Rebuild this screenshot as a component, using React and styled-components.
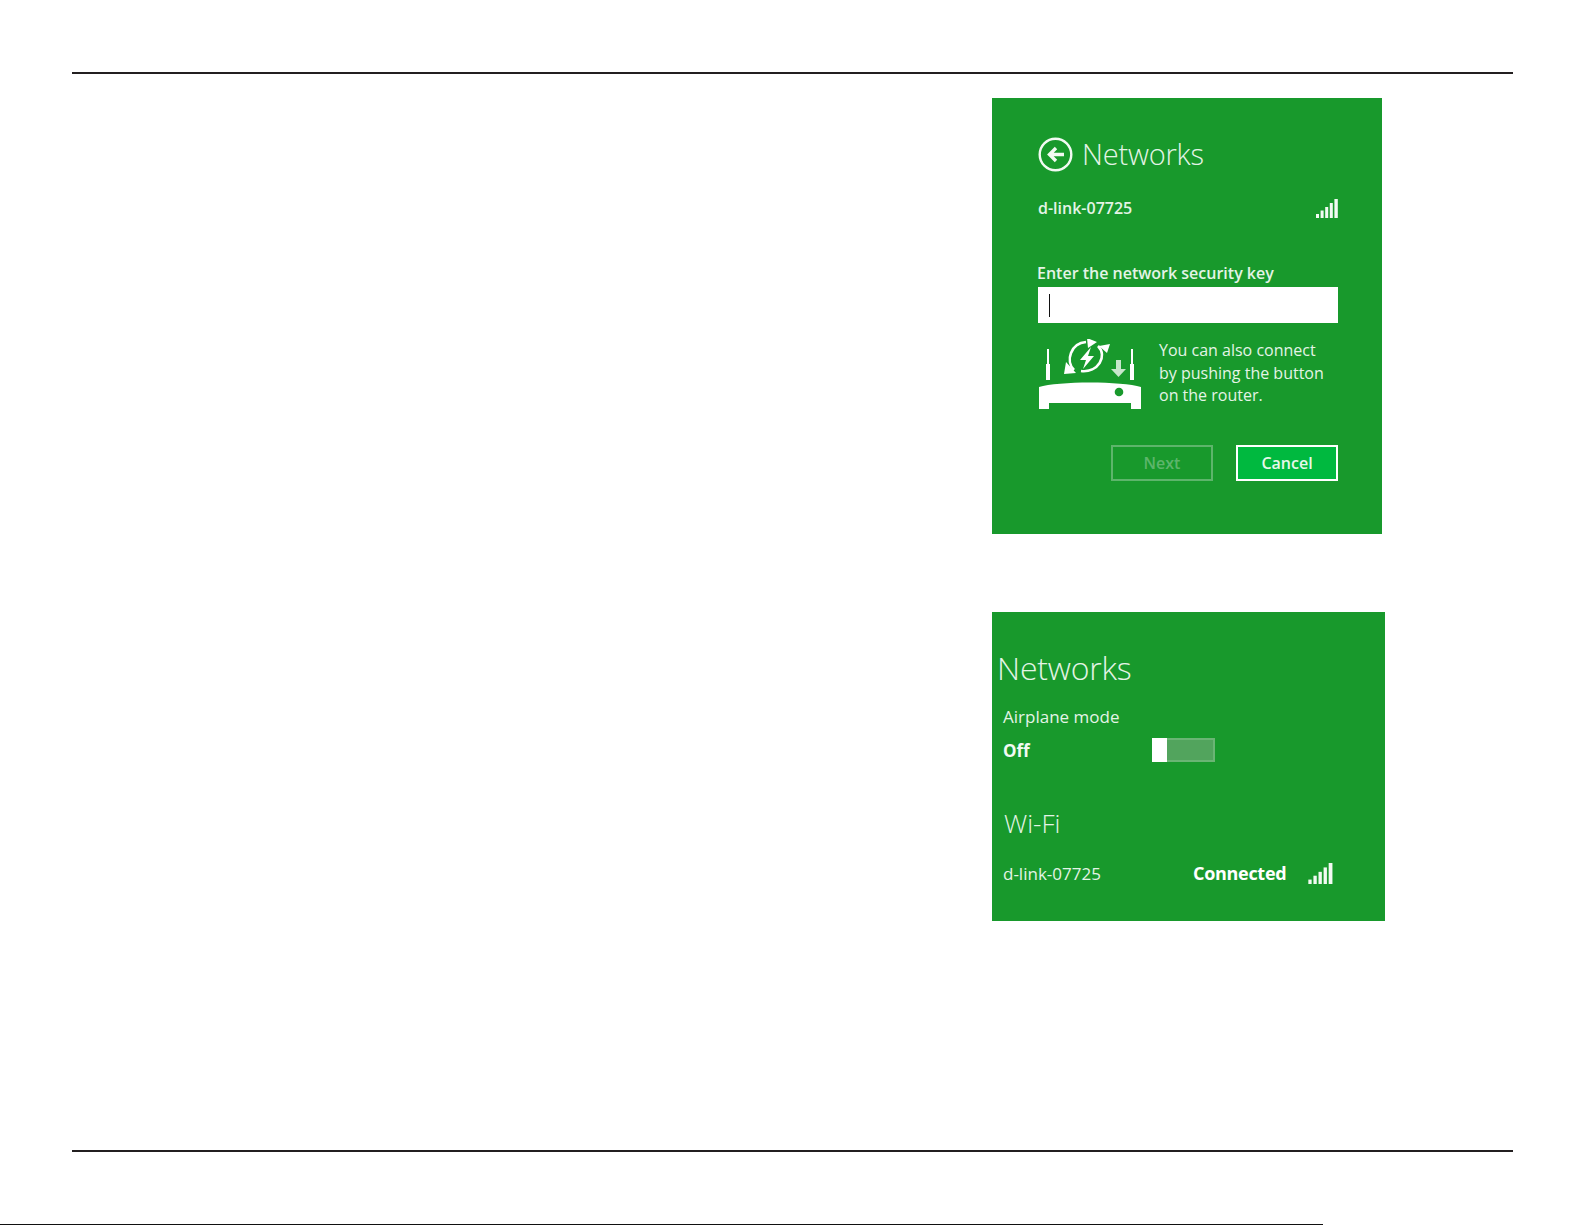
import React from 'react';
import styled, { createGlobalStyle } from 'styled-components';

const GREEN = '#18992c';
const TEXT = '#e4f4e6';
const SANS = '"Open Sans", "Noto Sans", sans-serif';

const GlobalStyle = createGlobalStyle`
  html, body {
    margin: 0;
    padding: 0;
    background: #fff;
  }
`;

const Page = styled.div`
  position: relative;
  width: 1585px;
  height: 1225px;
  overflow: hidden;
  padding-top: 72px;
  box-sizing: border-box;
  font-family: ${SANS};
`;

const Rule = styled.div`
  height: 2px;
  margin: 0 72px;
  background: #231f20;
`;

const Content = styled.main`
  height: 1076px;
  padding: 24px 0 0 992px;
  box-sizing: border-box;
`;

const Panel = styled.section`
  width: ${(p) => p.$w}px;
  height: ${(p) => p.$h}px;
  margin-bottom: 78px;
  background: ${GREEN};
  color: ${TEXT};
  box-sizing: border-box;
`;

const KeyPanel = styled(Panel)`
  display: flex;
  flex-direction: column;
  padding: 38px 44px 0 46px;
`;

const TitleRow = styled.div`
  display: flex;
  align-items: center;
  gap: 9px;
  height: 36px;
`;

const Title = styled.h2`
  margin: 0;
  font-size: 29px;
  font-weight: 300;
  line-height: 36px;
  letter-spacing: -0.2px;
`;

const NetRow = styled.div`
  display: flex;
  justify-content: space-between;
  align-items: center;
  margin-top: 24px;
  height: 24px;
  font-size: 16px;
  font-weight: 600;
`;

const KeyLabel = styled.label`
  margin: 42px 0 3px -1px;
  font-size: 16px;
  font-weight: 600;
  line-height: 22px;
`;

const KeyInput = styled.div`
  display: flex;
  align-items: center;
  height: 36px;
  padding-left: 11px;
  background: #fff;
`;

const Caret = styled.span`
  width: 1px;
  height: 23px;
  background: #111;
`;

const RouterRow = styled.div`
  display: flex;
  margin-top: 16px;
  gap: 17px;
`;

const RouterHint = styled.p`
  margin: 0;
  font-size: 16px;
  line-height: 22.6px;
`;

const Actions = styled.div`
  display: flex;
  justify-content: flex-end;
  gap: 23px;
  margin-top: 36px;
`;

const Button = styled.button`
  width: 102px;
  height: 36px;
  padding: 0;
  border: 2px solid ${(p) => (p.disabled ? '#5db56b' : '#fff')};
  background: ${(p) => (p.disabled ? 'transparent' : '#00b93f')};
  color: ${(p) => (p.disabled ? '#5db56b' : '#e8f8ea')};
  font-family: ${SANS};
  font-size: 16px;
  font-weight: 600;
`;

const StatusPanel = styled(Panel)`
  display: flex;
  flex-direction: column;
  padding: 38px 0 0 11px;
`;

const StatusTitle = styled(Title)`
  margin-left: -6px;
  font-size: 32px;
`;

const ModeLabel = styled.div`
  margin-top: 19px;
  font-size: 17px;
  line-height: 24px;
  font-weight: 400;
`;

const ToggleRow = styled.div`
  display: flex;
  align-items: center;
  height: 24px;
  margin-top: 9px;
`;

const OffText = styled.span`
  width: 149px;
  font-size: 17px;
  font-weight: 700;
  color: #f2faf3;
`;

const Toggle = styled.div`
  display: flex;
  width: 63px;
  height: 24px;
  background: #52a45d;
  box-shadow: inset 0 0 0 2px #6ab574;
`;

const Thumb = styled.span`
  width: 15px;
  height: 24px;
  background: #fff;
`;

const WifiTitle = styled.h3`
  margin: 44px 0 0 1px;
  font-size: 26px;
  font-weight: 300;
  line-height: 34px;
`;

const WifiRow = styled.div`
  display: flex;
  align-items: center;
  margin-top: 21px;
  height: 24px;
  font-size: 17px;
`;

const WifiName = styled.span`
  width: 190px;
`;

const Connected = styled.strong`
  width: 115px;
  font-size: 18px;
  font-weight: 700;
  color: #fff;
  letter-spacing: -0.3px;
`;

const ScanEdge = styled.div`
  position: absolute;
  left: 0;
  bottom: 0;
  width: 1323px;
  height: 1px;
  background: #111;
`;

const BackIcon = () => (
  <svg width="35" height="35" viewBox="0 0 35 35" fill="none" stroke="#f2faf3">
    <circle cx="17.5" cy="17.5" r="15.8" strokeWidth="2.4" />
    <path d="M26 17.5H12M18 11l-6.5 6.5L18 24" strokeWidth="3.4" />
  </svg>
);

const Signal = ({ width = 22, height = 19 }) => (
  <svg width={width} height={height} viewBox="0 0 22 19" fill="#f2faf3">
    <rect x="0" y="15" width="3" height="4" />
    <rect x="4.6" y="11.5" width="3" height="7.5" />
    <rect x="9.2" y="8" width="3" height="11" />
    <rect x="13.8" y="4" width="3" height="15" />
    <rect x="18.4" y="0" width="3.4" height="19" />
  </svg>
);

const RouterIcon = () => (
  <svg width="104" height="70" viewBox="0 0 104 70" fill="#fff">
    <path d="M9 10h2v30H9zM93 10h2v30h-2z" />
    <path d="M8 25h4v16H8zM92 25h4v16h-4z" />
    <path d="M1 48C20 42 84 42 103 48V70H93V64H11V70H1Z" />
    <circle cx="81" cy="53" r="4.3" fill={GREEN} />
    <path d="M78 21h5v9h5l-7.5 8-7.5-8h5z" fill="#c8e6cc" />
    <g fill="none" stroke="#fff" strokeWidth="2.6">
      <path d="M36 31C27 22 33 4 48 3" />
      <path d="M43 32C60 34 70 17 60 7" />
    </g>
    <path d="M49 -1l10 4-9 6zM28 23l10 11-12 1zM69 14l-8-7 11-2z" />
    <path d="M53 8L42 21h6l-3 9 11-13h-6z" />
  </svg>
);

const App = () => (
  <Page>
    <GlobalStyle />
    <Rule />
    <Content>
      <KeyPanel $w={390} $h={436}>
        <TitleRow>
          <BackIcon />
          <Title>Networks</Title>
        </TitleRow>
        <NetRow>
          <span>d-link-07725</span>
          <Signal />
        </NetRow>
        <KeyLabel>Enter the network security key</KeyLabel>
        <KeyInput>
          <Caret />
        </KeyInput>
        <RouterRow>
          <RouterIcon />
          <RouterHint>
            You can also connect
            <br />
            by pushing the button
            <br />
            on the router.
          </RouterHint>
        </RouterRow>
        <Actions>
          <Button disabled>Next</Button>
          <Button>Cancel</Button>
        </Actions>
      </KeyPanel>
      <StatusPanel $w={393} $h={309}>
        <StatusTitle>Networks</StatusTitle>
        <ModeLabel>Airplane mode</ModeLabel>
        <ToggleRow>
          <OffText>Off</OffText>
          <Toggle>
            <Thumb />
          </Toggle>
        </ToggleRow>
        <WifiTitle>Wi-Fi</WifiTitle>
        <WifiRow>
          <WifiName>d-link-07725</WifiName>
          <Connected>Connected</Connected>
          <Signal width={25} height={21} />
        </WifiRow>
      </StatusPanel>
    </Content>
    <Rule />
    <ScanEdge />
  </Page>
);

export default App;
